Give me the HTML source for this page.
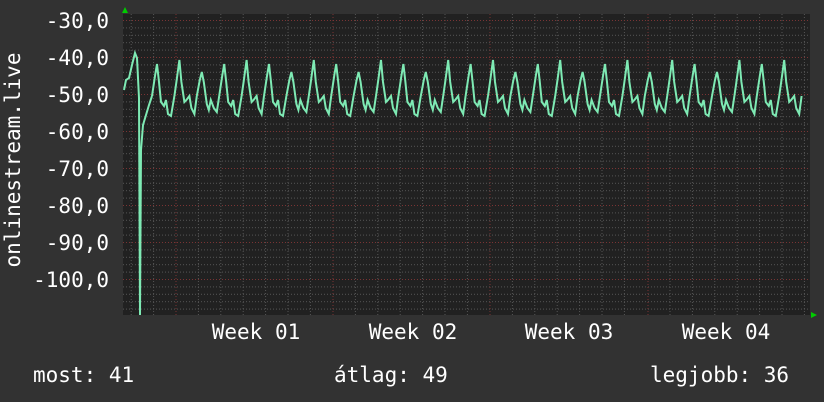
<!DOCTYPE html>
<html><head><meta charset="utf-8"><style>
body{margin:0;background:#323232;width:824px;height:402px;overflow:hidden}
svg{display:block}
text{font-family:"DejaVu Sans Mono","Liberation Mono",monospace;font-size:21px;fill:#fff}
</style></head><body>
<svg width="824" height="402" viewBox="0 0 824 402">
<defs>
<pattern id="minh" x="0" y="20" width="824" height="7.4" patternUnits="userSpaceOnUse">
<line x1="0" y1="0.5" x2="824" y2="0.5" stroke="#555" stroke-dasharray="1 2"/>
</pattern>
<path id="ca" d="M0,0 l3,-20 l2,-12 l2,18 l2,20 l3,4 l2,-6 l2,14 l3,2 l3.4,-20" fill="none" stroke="#7eeab4" stroke-width="2"/>
<path id="cb" d="M0,0 l2,-14 l3,-22 l2,22 l3,20 l2,-2 l3,-4 l2,12 l3,6 l2.4,-18" fill="none" stroke="#7eeab4" stroke-width="2"/>
<path id="cc" d="M0,0 l3,-16 l2,-8 l2,10 l3,22 l2,6 l2,-10 l3,8 l3,4 l2.4,-16" fill="none" stroke="#7eeab4" stroke-width="2"/>
</defs>
<rect x="123" y="14" width="687" height="301" fill="#212121"/>
<rect x="123" y="14" width="687" height="301" fill="url(#minh)"/>
<g stroke="#555" stroke-dasharray="1 2">
<line x1="131.2" y1="14" x2="131.2" y2="315"/><line x1="153.6" y1="14" x2="153.6" y2="315"/>
<line x1="198.4" y1="14" x2="198.4" y2="315"/><line x1="220.8" y1="14" x2="220.8" y2="315"/><line x1="243.2" y1="14" x2="243.2" y2="315"/><line x1="265.6" y1="14" x2="265.6" y2="315"/><line x1="288" y1="14" x2="288" y2="315"/><line x1="310.4" y1="14" x2="310.4" y2="315"/>
<line x1="355.4" y1="14" x2="355.4" y2="315"/><line x1="377.8" y1="14" x2="377.8" y2="315"/><line x1="400.2" y1="14" x2="400.2" y2="315"/><line x1="422.6" y1="14" x2="422.6" y2="315"/><line x1="445" y1="14" x2="445" y2="315"/><line x1="467.4" y1="14" x2="467.4" y2="315"/>
<line x1="512.4" y1="14" x2="512.4" y2="315"/><line x1="534.8" y1="14" x2="534.8" y2="315"/><line x1="557.2" y1="14" x2="557.2" y2="315"/><line x1="579.6" y1="14" x2="579.6" y2="315"/><line x1="602" y1="14" x2="602" y2="315"/><line x1="624.4" y1="14" x2="624.4" y2="315"/>
<line x1="670" y1="14" x2="670" y2="315"/><line x1="692.4" y1="14" x2="692.4" y2="315"/><line x1="714.8" y1="14" x2="714.8" y2="315"/><line x1="737.2" y1="14" x2="737.2" y2="315"/><line x1="759.6" y1="14" x2="759.6" y2="315"/><line x1="782" y1="14" x2="782" y2="315"/><line x1="804.4" y1="14" x2="804.4" y2="315"/>
</g>
<g stroke="#7a3434" stroke-dasharray="1 2">
<line x1="176" y1="14" x2="176" y2="315"/><line x1="333" y1="14" x2="333" y2="315"/><line x1="490" y1="14" x2="490" y2="315"/><line x1="648" y1="14" x2="648" y2="315"/>
<line x1="123" y1="20.5" x2="810" y2="20.5"/><line x1="123" y1="57.5" x2="810" y2="57.5"/><line x1="123" y1="94.5" x2="810" y2="94.5"/><line x1="123" y1="131.5" x2="810" y2="131.5"/><line x1="123" y1="168.5" x2="810" y2="168.5"/><line x1="123" y1="205.5" x2="810" y2="205.5"/><line x1="123" y1="242.5" x2="810" y2="242.5"/><line x1="123" y1="279.5" x2="810" y2="279.5"/>
</g>
<polyline points="124,90 126,80 129,78 132,65 135,53 137,58 139,98 140,315 141,150 143,125 146,115 149,105 152,96" fill="none" stroke="#7eeab4" stroke-width="2"/>
<g transform="translate(0,96)">
<use href="#ca" x="152"/><use href="#cb" x="174.4"/><use href="#cc" x="196.8"/><use href="#ca" x="219.2"/><use href="#cb" x="241.6"/><use href="#ca" x="264"/><use href="#cc" x="286.4"/><use href="#cb" x="308.8"/><use href="#ca" x="331.2"/><use href="#cc" x="353.6"/><use href="#cb" x="376"/><use href="#ca" x="398.4"/><use href="#cc" x="420.8"/><use href="#cb" x="443.2"/><use href="#ca" x="465.6"/><use href="#cb" x="488"/><use href="#cc" x="510.4"/><use href="#ca" x="532.8"/><use href="#cb" x="555.2"/><use href="#cc" x="577.6"/><use href="#ca" x="600"/><use href="#cb" x="622.4"/><use href="#cc" x="644.8"/><use href="#cb" x="667.2"/><use href="#ca" x="689.6"/><use href="#cc" x="712"/><use href="#cb" x="734.4"/><use href="#ca" x="756.8"/><use href="#cb" x="779.2"/>
</g>
<polygon points="122,13 125,7 128,13" fill="#0c0"/>
<polygon points="811,312 817,315 811,318" fill="#0c0"/>
<g text-anchor="end">
<text x="109" y="28">-30,0</text><text x="109" y="65">-40,0</text><text x="109" y="102">-50,0</text><text x="109" y="139">-60,0</text><text x="109" y="176">-70,0</text><text x="109" y="213">-80,0</text><text x="109" y="250">-90,0</text><text x="109" y="287">-100,0</text>
</g>
<text transform="translate(20,160) rotate(-90)" text-anchor="middle">onlinestream.live</text>
<g text-anchor="middle">
<text x="256" y="339">Week 01</text><text x="413" y="339">Week 02</text><text x="569" y="339">Week 03</text><text x="726" y="339">Week 04</text>
</g>
<text x="33" y="382">most: 41</text>
<text x="334" y="382">átlag: 49</text>
<text x="650" y="382">legjobb: 36</text>
</svg>
</body></html>
